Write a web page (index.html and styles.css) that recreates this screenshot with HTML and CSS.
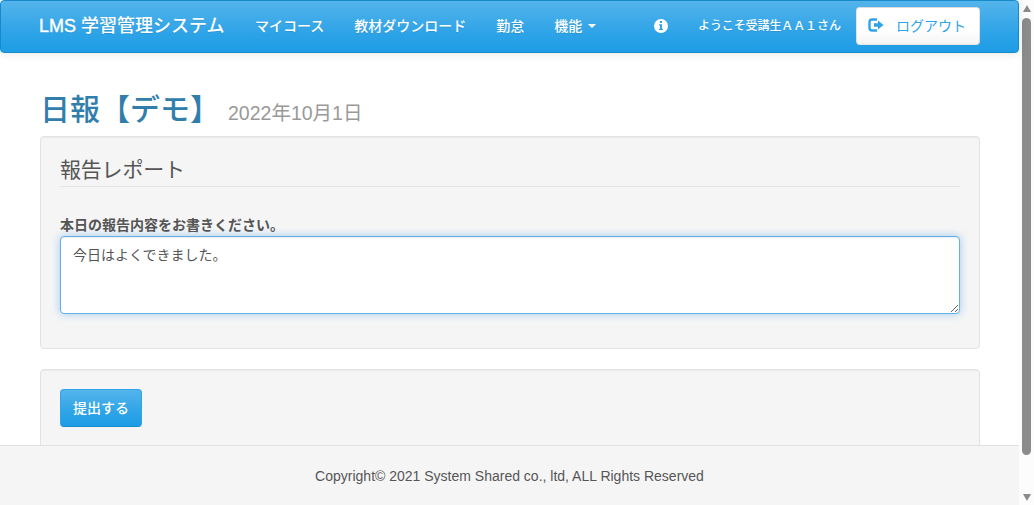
FILE: index.html
```html
<!DOCTYPE html>
<html lang="ja">
<head>
<meta charset="utf-8">
<title>日報【デモ】 | LMS 学習管理システム</title>
<link rel="stylesheet" href="styles.css">
</head>
<body>
<div class="page">
  <header class="navbar">
    <a class="brand"><span class="brand-mark">LMS</span> 学習管理システム</a>
    <nav class="menu">
      <a>マイコース</a>
      <a>教材ダウンロード</a>
      <a>勤怠</a>
      <a>機能<span class="caret"></span></a>
    </nav>
    <svg class="info" viewBox="0 0 14 14"><circle cx="7" cy="7" r="7" fill="#fff"/><path fill="#2fa4e7" d="M6 2h2v2H6zM5 5.200h3v4.600h1V11H5V9.800h1V6.400H5z"/></svg>
    <span class="welcome">ようこそ受講生ＡＡ１さん</span>
    <button class="btn logout"><svg class="logout-icon" viewBox="0 0 16 14"><path fill="none" stroke="#2fa4e7" stroke-width="2.400" d="M9 1.500H4.200Q1.500 1.500 1.500 4.200V9.800Q1.500 12.500 4.200 12.500H9"/><path fill="#2fa4e7" d="M6 5.300h4V2.500L15.500 7 10 11.500V8.700H6z"/></svg><span>ログアウト</span></button>
  </header>
  <main class="content">
    <h2 class="title">日報【デモ】<small>2022年10月1日</small></h2>
    <section class="well report">
      <h3 class="legend">報告レポート</h3>
      <label class="label" for="report">本日の報告内容をお書きください。</label>
      <textarea class="field" id="report">今日はよくできました。</textarea>
    </section>
    <section class="well submit">
      <button class="btn primary">提出する</button>
    </section>
  </main>
  <footer class="footer">Copyright© 2021 System Shared co., ltd, ALL Rights Reserved</footer>
</div>
<div class="scrollbar">
  <span class="arrow-up"></span>
  <span class="thumb"></span>
  <span class="arrow-down"></span>
</div>
</body>
</html>
```
FILE: styles.css
```css
* { box-sizing: border-box; }
body {
  margin: 0;
  height: 505px;
  display: flex;
  overflow: hidden;
  background: #fff;
  color: #555;
  font: 14px/20px "Liberation Sans", "Noto Sans CJK JP", sans-serif;
}
button, textarea { font: inherit; }
.page {
  width: 1019px;
  height: 505px;
  display: flex;
  flex-direction: column;
}
.navbar {
  position: relative;
  flex: none;
  display: flex;
  align-items: center;
  height: 53px;
  padding: 0 38px 2px;
  color: #fff;
  font-weight: 500;
  white-space: nowrap;
  border: 1px solid #178acc;
  border-radius: 4px;
  background: linear-gradient(#54b4eb, #2fa4e7 60%, #1d9ce5);
  box-shadow: 0 1px 10px rgba(0, 0, 0, .1);
  text-shadow: 0 1px 0 rgba(0, 0, 0, .1);
}
.brand {
  width: 186px;
  font-size: 18px;
}
.brand-mark { -webkit-text-stroke: .4px #fff; }
.menu {
  display: flex;
  gap: 30px;
  margin-left: 30px;
}
.caret {
  display: inline-block;
  margin-left: 6px;
  vertical-align: 3px;
  border: 4px solid transparent;
  border-top-color: #fff;
  border-bottom: 0;
}
.info {
  width: 14px;
  height: 14px;
  margin-left: auto;
}
.welcome {
  margin-left: 30px;
  width: 143px;
  padding-top: 1px;
  font-size: 12px;
  letter-spacing: -.1px;
}
.btn {
  display: flex;
  align-items: center;
  height: 38px;
  padding: 0 12px;
  border-radius: 4px;
  white-space: nowrap;
}
.logout {
  width: 124px;
  margin-left: 15px;
  padding: 0 11px;
  color: #2fa4e7;
  font-weight: 400;
  text-shadow: none;
  border: 1px solid rgba(0, 0, 0, .1);
  background: linear-gradient(#fff, #fff 60%, #f5f5f5);
}
.logout-icon {
  width: 16px;
  height: 14px;
  margin: 0 12px 2px 0;
}
.content {
  flex: 1;
  min-height: 0;
  overflow: hidden;
  padding: 40px 39px 0 40px;
}
.title {
  margin: 0 0 10px;
  height: 33px;
  font-size: 30px;
  line-height: 33px;
  font-weight: 500;
  color: #317eac;
}
.title small {
  margin-left: 8px;
  font-size: 19.5px;
  font-weight: 400;
  color: #999;
}
.well {
  padding: 19px;
  margin-bottom: 20px;
  border: 1px solid #e3e3e3;
  border-radius: 4px;
  background: #f5f5f5;
  box-shadow: inset 0 1px 1px rgba(0, 0, 0, .05);
}
.report { height: 213px; }
.legend {
  margin: 0 0 28px;
  height: 31px;
  font-size: 21px;
  line-height: 28px;
  letter-spacing: -.2px;
  font-weight: 400;
  border-bottom: 1px solid #e5e5e5;
}
.label {
  display: block;
  height: 21px;
  font-weight: 700;
}
.field {
  display: block;
  width: 900px;
  height: 78px;
  padding: 8px 12px;
  color: #555;
  border: 1px solid #66afe9;
  border-radius: 4px;
  outline: 0;
  background: #fff;
  resize: vertical;
  box-shadow: inset 0 1px 1px rgba(0, 0, 0, .075), 0 0 8px rgba(102, 175, 233, .6);
}
.submit { height: 120px; }
.primary {
  width: 82px;
  color: #fff;
  font-weight: 500;
  border: 1px solid #2fa4e7;
  border-bottom-color: #178acc;
  background: linear-gradient(#54b4eb, #2fa4e7 60%, #1d9ce5);
}
.footer {
  flex: none;
  height: 60px;
  padding-top: 20px;
  text-align: center;
  border-top: 1px solid #e0e0e0;
  background: #f5f5f5;
}
.scrollbar {
  width: 15px;
  height: 505px;
  padding: 5px 0 4px;
  display: flex;
  flex-direction: column;
  align-items: center;
  background: #fcfcfc;
}
.arrow-up, .arrow-down {
  border: 4.500px solid transparent;
}
.arrow-up {
  border-top: 0;
  border-bottom: 7px solid #8b8b8b;
}
.thumb {
  width: 9px;
  height: 437px;
  margin: 6px 0 auto;
  border-radius: 5px;
  background: #8b8b8b;
}
.arrow-down {
  border-bottom: 0;
  border-top: 7px solid #8b8b8b;
}
```
